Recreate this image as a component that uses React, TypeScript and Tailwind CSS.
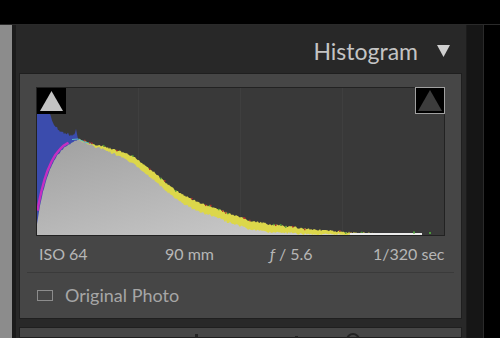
import React from "react";

function rnd(seed: number) {
  let s = seed;
  return () => {
    s = (s * 9301 + 49297) % 233280;
    return s / 233280;
  };
}

type P = [number, number];

function interp(pts: P[], x: number): number {
  if (x <= pts[0][0]) return pts[0][1];
  for (let i = 0; i < pts.length - 1; i++) {
    const [x0, y0] = pts[i];
    const [x1, y1] = pts[i + 1];
    if (x >= x0 && x <= x1) {
      const t = (x - x0) / (x1 - x0 || 1);
      return y0 + (y1 - y0) * t;
    }
  }
  return pts[pts.length - 1][1];
}

const grayLeft: P[] = [
  [0, 136], [3, 118], [6, 104], [9, 93], [12, 84], [16, 75], [20, 68], [24, 63], [28, 59], [33, 56], [38, 53], [41, 52],
];

const yellowTop: P[] = [
  [41, 51], [48, 53.5], [58, 56.5], [68, 59], [78, 62], [88, 65], [98, 70], [108, 77], [118, 85], [128, 94], [138, 102],
  [150, 109], [163, 115], [178, 120], [196, 127], [213, 133], [238, 137], [263, 140], [293, 143], [323, 145], [363, 146], [407, 146],
];

const thick: P[] = [
  [41, 1], [60, 2], [68, 3], [80, 5], [95, 7], [120, 8], [160, 9], [200, 9], [230, 8], [260, 6], [290, 4], [315, 2], [335, 1], [407, 1],
];

function buildPaths() {
  const r = rnd(7);
  const H = 147;
  let g = `M0 ${H} `;
  let yl = `M41 ${H} `;
  const yPts: P[] = [];
  for (let x = 0; x <= 340; x += 1) {
    let gy: number;
    if (x <= 41) {
      gy = interp(grayLeft, x) + (r() - 0.5) * 1.2;
    } else {
      const yt = interp(yellowTop, x) + (r() - 0.5) * 2;
      yPts.push([x, yt]);
      yl += `L${x} ${yt.toFixed(1)} `;
      gy = yt + interp(thick, x) + (r() - 0.5) * 1.2;
    }
    g += `L${x} ${Math.min(gy, H).toFixed(1)} `;
  }
  for (let x = 341; x <= 372; x += 1) {
    const yt = interp(yellowTop, x) + (r() - 0.5) * 1.5;
    yPts.push([x, yt]);
    yl += `L${x} ${yt.toFixed(1)} `;
  }
  g += `L340 ${H} Z`;
  yl += `L372 ${H} Z`;
  const blueTop: P[] = [
    [0, 25], [11, 25], [13, 27], [15, 32], [17, 36], [20, 40], [23, 43], [27, 45], [31, 46], [35, 47], [38, 46], [39, 41], [40, 47], [41, 51],
  ];
  let b = `M0 25 `;
  for (let x = 0; x <= 41; x += 1) {
    const y = interp(blueTop, x) + (x > 12 ? (r() - 0.5) * 3.5 : 0);
    b += `L${x} ${y.toFixed(1)} `;
  }
  b += `L41 60 L0 ${H} Z`;
  let m = "";
  for (let x = 2; x <= 33; x += 1) {
    const y = interp(grayLeft, x);
    m += `${m ? "L" : "M"}${x - 1.5} ${y - 1.3} `;
  }
  const specks: { x: number; y: number; c: string }[] = [];
  for (let i = 0; i < yPts.length; i += 1) {
    const v = r();
    if (v < 0.09) specks.push({ x: yPts[i][0], y: yPts[i][1] - 0.6, c: v < 0.04 ? "#b5322f" : "#4c9a3a" });
  }
  return { g, yl, b, m, specks };
}

const { g, yl, b, m, specks } = buildPaths();

function Histogram() {
  return (
    <div className="relative w-[409px] h-[149px] border border-[#222222] bg-[#393939]">
      <svg width="407" height="147" viewBox="0 0 407 147" className="block">
        <defs>
          <linearGradient id="gg" x1="0" y1="0" x2="1" y2="1">
            <stop offset="0" stopColor="#a0a0a0" />
            <stop offset="1" stopColor="#d0d0d0" />
          </linearGradient>
        </defs>
        <line x1="101.5" y1="0" x2="101.5" y2="147" stroke="#3f3f3f" strokeWidth="1" />
        <line x1="203.5" y1="0" x2="203.5" y2="147" stroke="#3f3f3f" strokeWidth="1" />
        <line x1="305.5" y1="0" x2="305.5" y2="147" stroke="#3f3f3f" strokeWidth="1" />
        <path d={b} fill="#3b4cad" />
        <path d={yl} fill="#dcd74a" />
        <path d={m} fill="none" stroke="#c52ec2" strokeWidth="2.4" />
        <path d={g} fill="url(#gg)" />
        <path d="M35 51.5 L41 51 L48 54 L55 56" fill="none" stroke="#5fb9c6" strokeWidth="1" />
        {specks.map((s, i) => (
          <rect key={i} x={s.x} y={s.y} width="1.5" height="1.5" fill={s.c} />
        ))}
        <rect x="313" y="145" width="72" height="2" fill="#ececec" />
        <rect x="376" y="143.5" width="2" height="2" fill="#4c9a3a" />
        <rect x="392" y="144" width="2" height="2" fill="#4c9a3a" />
      </svg>
      <div className="absolute left-0 top-0 w-[29px] h-[26px] bg-black flex items-center justify-center">
        <svg width="25" height="22" viewBox="0 0 25 22">
          <polygon points="12.5,1 24,21 1,21" fill="#c3c3c3" />
        </svg>
      </div>
      <div className="absolute right-[-1px] top-[-1px] w-[30px] h-[27px] bg-black border border-[#a0a0a0] flex items-center justify-center">
        <svg width="26" height="23" viewBox="0 0 26 23">
          <polygon points="13,1 25,22 1,22" fill="#3c3c3c" />
        </svg>
      </div>
    </div>
  );
}

export default function App() {
  const font = { fontFamily: '"Lato", "Noto Sans", sans-serif' };
  return (
    <div className="w-[500px] h-[338px] bg-black overflow-hidden flex flex-col" style={font}>
      <div className="h-[24px] shrink-0 bg-black" />
      <div className="flex flex-1 border-t border-[#2a2a2a]">
        <div className="w-[12px] bg-[#8c8c8c]" />
        <div className="w-[4px] bg-[#1b1b1b]" />
        <div className="w-[450px] bg-[#282828] flex flex-col">
          <div className="h-[48px] shrink-0 flex items-center justify-end pr-[16px]">
            <span className="text-[23px] text-[#c4c4c4] leading-none mr-[19px] mt-[4px]">Histogram</span>
            <svg width="13" height="13" viewBox="0 0 13 13" className="mt-[2px]">
              <polygon points="0,1 13,1 6.5,13" fill="#d0d0d0" />
            </svg>
          </div>
          <div className="ml-[3px] mr-[4px] h-[246px] shrink-0 bg-[#464646] border border-[#1f1f1f] flex flex-col">
            <div className="pl-[16px] pt-[13px]">
              <Histogram />
            </div>
            <div className="h-[36px] flex items-center text-[16px] text-[#b6b6b6] leading-none">
              <span className="ml-[19px] w-[126px]">ISO 64</span>
              <span className="w-[105px]">90 mm</span>
              <span className="w-[103px]"><span className="italic">ƒ</span> / 5.6</span>
              <span>1/320 sec</span>
            </div>
            <div className="mx-[7px] h-px bg-[#3a3a3a]" />
            <div className="flex items-center h-[44px] pl-[17px]">
              <div className="w-[16px] h-[11px] border border-[#8c8c8c] mr-[12px]" />
              <span className="text-[18px] text-[#a6a6a6] leading-none">Original Photo</span>
            </div>
          </div>
          <div className="h-[8px] shrink-0" />
          <div className="ml-[3px] mr-[4px] flex-1 bg-[#464646] border border-[#1f1f1f] relative">
            <div className="absolute left-[175px] top-[6px] w-[3px] h-[6px] bg-[#222]" />
            <div className="absolute left-[275px] top-[8px] w-[3px] h-[6px] bg-[#222]" />
            <div className="absolute left-[326px] top-[5px] w-[14px] h-[14px] rounded-full border-2 border-[#222]" />
          </div>
        </div>
        <div className="w-[18px] bg-[#161616] border-l border-[#1c1c1c] border-r border-r-[#2a2a2a]" />
        <div className="flex-1 bg-black" />
      </div>
    </div>
  );
}
